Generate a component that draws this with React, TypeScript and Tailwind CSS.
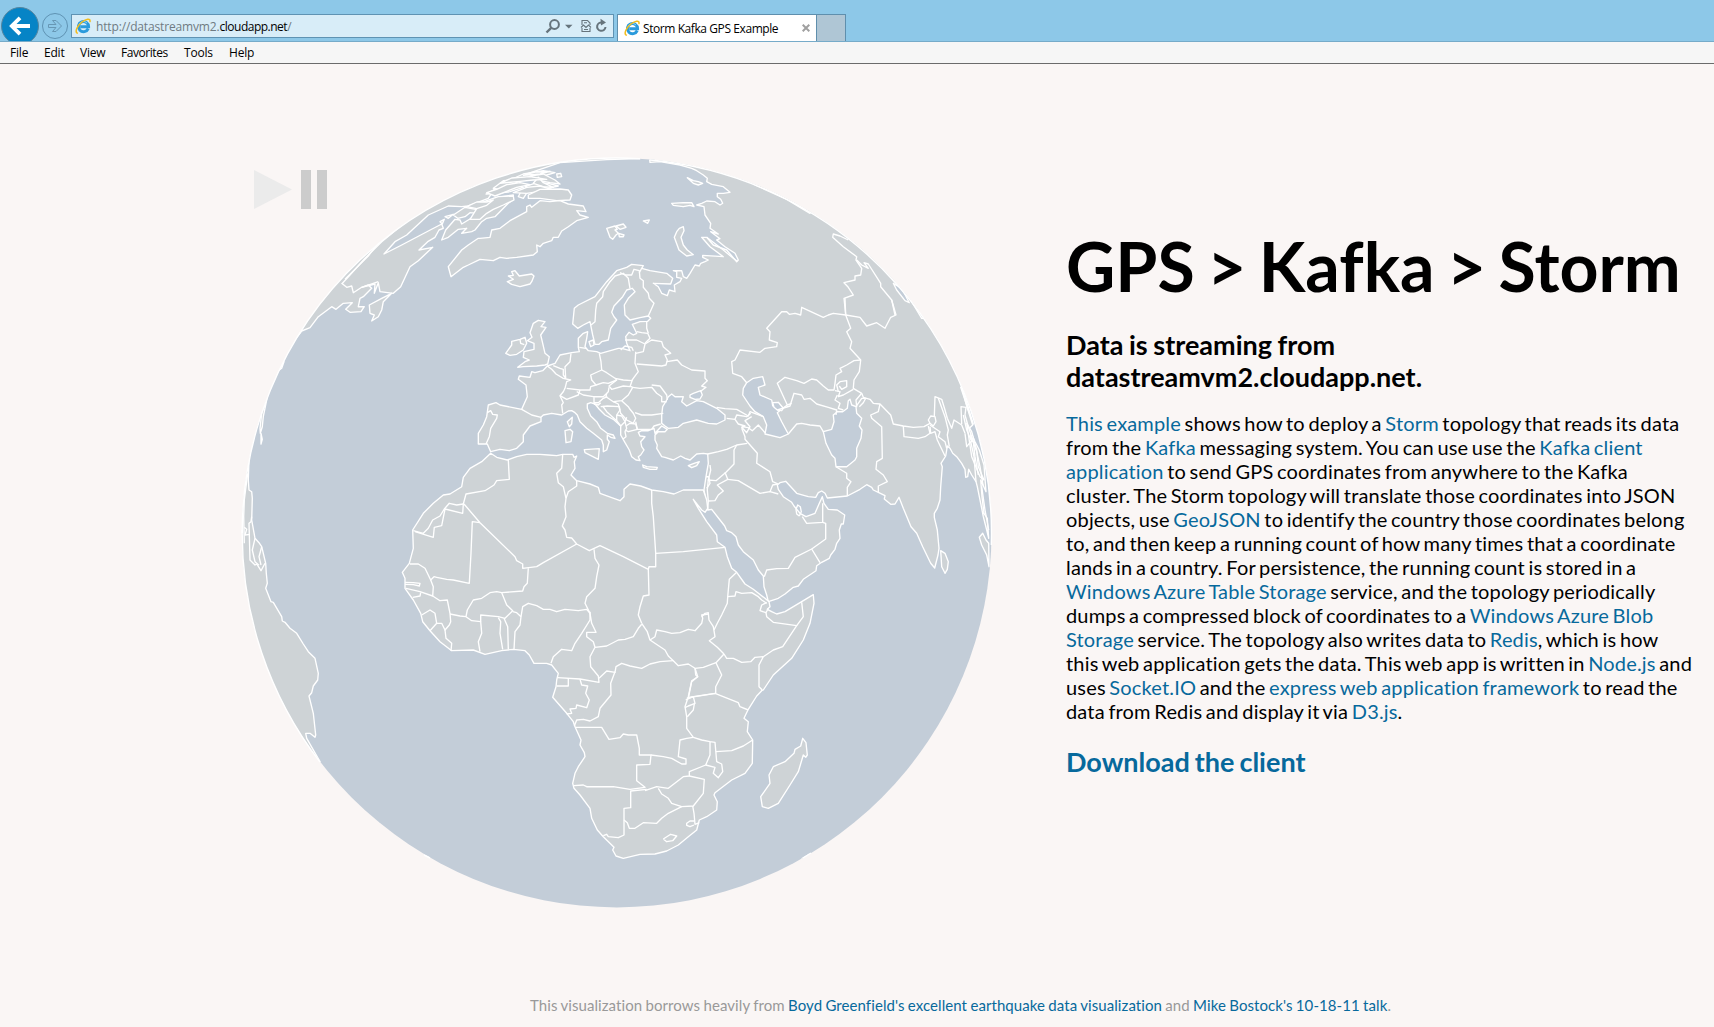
import React from "react";

/* Each run of vertices belongs to a map tile; three tile units make one pixel. */
const TILES: Record<string, [number, number]> = {
  nw: [235, 150], n: [480, 150], ne: [640, 150], eu: [470, 300], as: [700, 300],
  wa: [390, 440], ea: [630, 440], sa: [540, 640], am: [235, 440],
};

type Run = [string, string];

function points(runs: Run[]) {
  const out: string[] = [];
  for (const [tile, pts] of runs) {
    const [ox, oy] = TILES[tile];
    for (const p of pts.trim().split(/\s+/)) {
      const [x, y] = p.split(",").map(Number);
      out.push((ox + x / 3).toFixed(1) + " " + (oy + y / 3).toFixed(1));
    }
  }
  return "M" + out.join("L");
}

const LAND: Run[][] = [
  // Eurasia
  [
    ["as", "950,-150 785,262 800,318 818,375 808,385 825,425 838,450 852,495 858,575 842,540 846,590 852,640 862,655 866,715 860,690 850,650 842,610 832,560 828,545 815,525 806,508 803,530 797,532 795,508 785,490 770,470 758,460 750,445 742,438 740,450 737,468 723,490 727,500 722,560 720,600 712,625 703,640 703,652 712,690 717,745 714,765 704,804 692,790 668,740 650,700 633,680 610,625 597,592 585,612 572,613 553,597 555,587 535,577 520,570 515,562 500,554 480,568 442,588 382,594 375,580 365,573 355,578 347,592 325,590 290,580 257,544 240,548 232,555 235,568 250,590 275,607 282,618 300,640 318,650 345,640 357,612 367,590 372,610 385,628 412,630 434,645 430,672 424,672 418,690 420,715 410,730 405,748 392,765 388,775 365,787 350,797 348,812 310,838"],
    ["ea", "505,438 490,442 465,462 445,475 415,485 410,465 402,440 400,408 385,390 370,360 340,335 325,315 318,290 305,278 290,272 284,258 270,240 245,208 233,210 222,150 228,110 235,70 233,42"],
    ["eu", "700,460 680,462 660,480 645,475 632,468 610,480 585,472 575,470 560,445 562,435 555,420 555,405 565,395 585,395 592,388 575,378 555,400 552,385 535,392 515,392 505,397 510,408 525,410 512,425 515,440 522,450 512,465 505,470 510,482 498,480 485,470 478,450 465,428 452,405 452,378 430,358 405,345 388,328 375,312 362,308 352,312 352,325 362,348 380,365 392,385 412,400 430,405 435,415 422,412 412,405 412,418 418,425 410,450 400,455 400,435 395,420 370,400 350,385 330,365 322,345 315,338 305,332 295,333 275,345 245,340 220,345 213,352 213,365 180,378 160,405 160,425 140,445 118,452 90,448 62,455 52,432 25,432 25,400 40,375 50,350 55,315 78,308 90,315 155,328 172,290 168,255 145,238 148,228 180,232 185,215 195,218 218,212 232,198 255,190 270,165 305,158 328,155 325,142 325,115 340,100 353,95 350,115 345,140 355,152 380,155 392,160 445,145 455,145 480,152"],
    ["n", "440,580 437,560 447,547 460,555 470,550 457,523 480,515 503,514 512,505 505,498 480,503 450,510 435,495 433,465 445,445 465,425 457,415 440,420 428,440 402,468 395,487 402,500 410,510 392,535 385,570 365,575 357,583 345,583 338,555 333,530 330,515 310,525 293,535 278,522 283,475 295,465 345,440 380,395 410,362 440,352 455,343 490,347 485,355 510,362 560,370 578,385 572,402 520,400 535,410 545,430 562,437 568,420 585,425 583,405 600,395 605,385 590,382 590,365 580,362 605,362 610,380 620,385 630,370 645,345 658,348 662,340 675,335 685,330 668,322 668,316 730,320 690,290 665,262 680,262 700,285 740,300 770,335 775,330 765,310 735,290 710,270 720,266 692,245 715,252 690,235 692,220 675,195 672,170 650,165 665,160 680,153 705,155 720,165 728,160 722,148 712,140 712,130 730,130 750,127 730,110 695,103 680,95 682,85 670,75 650,62 635,55 600,45 540,35 510,37 500,-40"],
  ],
  // Africa
  [
    ["wa", "302,40 320,52 352,60 380,50 410,43 450,43 475,45 500,47 518,43 548,43 552,52 560,48 553,65 555,85 543,105 560,122 600,132 625,142 630,160 690,182 702,170 702,148 720,132 752,138 785,150 820,155 852,162 880,150 905,150 940,150"],
    ["ea", "230,180 233,205 225,217 215,210 190,178 205,205 230,245 260,285 262,305 285,322 292,350 305,385 320,397 345,432 370,448 405,475 417,485 420,500 412,508 425,515 440,522 465,515 515,485 550,464 552,490 540,550 520,600 485,655 430,705 400,750"],
    ["sa", "665,152 650,168 625,208 612,235 625,245 622,275 638,300 637,370 615,400 575,420 525,458 522,465 532,485 530,510 500,530 478,540 470,570 445,590 415,615 380,633 345,642 300,643 250,655 228,648 218,630 222,622 190,590 172,570 155,535 150,505 120,465 102,445 98,430 105,400 115,380 135,350 133,338 120,315 123,300 105,260 100,245 80,220 38,172 48,140 50,120 55,100 35,75"],
    ["wa", "470,670 432,670 418,645 405,632 370,628 335,632 285,643 250,630 185,632 150,605 120,572 98,545 92,520 70,480 45,445 45,415 37,397 58,370 70,325 68,270 100,220 130,190 160,165 180,162 215,140 220,112 240,85 275,65 302,40"],
  ],
  // Madagascar
  [["sa", "788,295 798,308 802,345 797,352 790,345 775,395 750,435 715,490 685,505 667,500 662,470 690,430 687,405 700,380 735,365 762,340 765,328 782,318 788,295"]],
  // North America
  [["nw", "0,800 200,543 225,533 250,500 290,470 303,478 325,460 352,458 332,478 345,487 378,485 388,470 370,470 375,445 385,440 410,415 400,405 380,412 420,402 418,430 430,398 435,425 475,430 497,410 525,350 550,332 593,292 552,300 578,275 600,262 612,240 625,235 620,222 580,243 500,285 447,312 480,275 515,255 580,195 640,168 680,170 700,168 760,145 780,115 830,90 880,70"], ["n", "240,38 380,29 480,26 480,-60 -700,-60"]],
  // Newfoundland
  [["nw", "405,490 403,465 440,445 470,430 445,455 440,480 430,500 410,513 418,495 405,490"]],
  // Baffin Island and its neighbours
  [["nw", "620,270 632,240 660,208 675,210 680,222 740,185 770,155 800,140 835,135 835,150 820,160 780,200 755,205 740,215 720,240 710,245 680,250 695,235 670,238 640,262 620,270"]],
  [["nw", "630,200 655,193 640,205 630,200"]],
  [["nw", "655,195 690,172 722,178 728,190 705,188 690,200 668,205 655,195"]],
  [["nw", "615,215 628,208 622,222 615,215"]],
  [["n", "0,160 20,152 55,140 100,138 102,150 70,165 40,178 20,190 0,208 -30,208 0,160"]],
  [["n", "18,132 60,110 110,105 130,112 90,125 50,130 18,132"]],
  [["n", "40,115 70,92 130,88 100,102 60,118 40,115"]],
  [["n", "90,90 130,72 190,62 225,68 190,78 130,84 90,90"]],
  [["n", "115,140 125,120 145,122 130,145 115,140"]],
  [["n", "135,110 170,98 205,100 235,108 200,116 165,122 135,110"]],
  [["n", "150,78 190,72 225,90 240,102 210,98 180,92 150,78"]],
  [["n", "160,100 175,82 190,98 220,112 190,110 160,100"]],
  [["n", "20,128 50,118 80,104 120,98 150,104 110,112 80,124 45,138 20,128"]],
  [["n", "60,100 95,84 150,80 200,88 160,90 120,94 60,100"]],
  [["n", "130,76 165,66 210,64 180,72 130,76"]],
  [["n", "100,128 140,112 180,108 215,118 180,124 140,130 100,128"]],
  [["n", "-40,170 -10,156 20,156 40,150 20,166 -10,176 -40,170"]],
  [["n", "230,72 242,70 245,80 232,82 230,72"]],
  [["n", "145,135 180,118 240,117 265,120 275,135 270,150 230,152 180,145 145,145 145,135"]],
  // Greenland
  [["n", "0,265 30,262 35,240 60,235 90,212 140,185 140,170 150,165 155,172 180,152 210,155 240,152 265,162 310,168 318,185 290,182 300,195 325,202 290,212 265,230 245,243 235,262 220,262 215,272 190,280 180,290 170,285 172,305 160,315 110,322 80,325 60,322 40,332 0,328"], ["nw", "700,345 685,352 648,380 640,350 680,300 700,285 730,265 735,265"]],
  // Iceland and the Arctic islands
  [["n", "95,365 105,362 118,378 155,372 162,378 155,395 150,402 120,410 95,403 82,395 100,388 85,378 100,376 95,365"]],
  [["n", "380,235 405,228 412,238 405,240 415,250 408,255 398,268 390,262 380,235"]],
  [["n", "408,228 430,222 438,232 420,238 408,228"]],
  [["n", "416,250 432,255 430,260 418,260 416,250"]],
  [["n", "490,213 508,210 503,220 490,213"]],
  [["n", "598,235 610,230 612,242 603,262 610,285 622,300 640,314 620,318 597,300 583,262 590,245 598,235"]],
  [["n", "575,160 610,158 635,158 642,170 630,166 610,170 580,166 575,160"]],
  [["n", "622,83 640,92 655,95 668,100 655,105 640,100 622,83"]],
  // British Isles
  [["eu", "205,61 225,65 213,80 228,82 212,105 218,130 225,160 238,170 233,192 225,195 200,198 160,200 143,202 165,185 178,180 160,172 162,155 192,148 192,130 172,122 186,112 180,98 190,70 205,61"]],
  [["eu", "107,160 125,135 125,124 150,118 165,112 170,130 160,150 140,163 120,166 107,160"]],
  // Mediterranean islands
  [["eu", "518,495 530,500 562,502 560,508 540,508 520,502 518,495"]],
  [["eu", "655,497 672,490 688,485 680,497 665,503 655,497"]],
  [["eu", "343,449 388,446 385,478 345,458 343,449"]],
  [["eu", "285,392 300,388 308,395 303,425 288,428 285,392"]],
  [["eu", "292,365 307,352 305,372 298,380 292,365"]],
  [["eu", "357,125 370,120 372,135 362,140 357,125"]],
  // Sri Lanka, Sumatra
  [["as", "722,752 735,760 745,785 742,808 735,820 725,800 722,752"]],
  [["as", "838,712 848,700 858,720 866,730 867,800 860,765 845,735 838,712"]],
  [["as", "800,370 815,395 830,450 835,500 852,540 840,530 815,470 800,370"]],
  // South America
  [["am", "-60,60 42,60 40,120 42,150 50,155 52,175 50,240 60,295 72,308 80,320 92,370 94,400 97,430 92,445 108,485 115,487 140,530 142,543 150,547 165,565 185,580 205,612 220,635 240,655 250,700 248,720 235,738 230,758 222,768 235,820 242,885 240,892 225,880 212,880 215,895 255,965 -60,1000"]],
  [["nw", "130,662 147,635 140,655 130,662"]],
  [["nw", "75,835 80,790 98,735 85,800 82,830 76,850 75,835"]],
  [["nw", "78,850 82,868 78,882 78,850"]],
  [["sa", "786,656 808,643 800,650 786,656"]],
];

const WATER: Run[][] = [
  [["eu", "575,345 578,320 590,300 595,290 605,282 615,290 640,290 635,305 650,318 680,302 700,305 740,325 765,345 765,360 740,372 715,370 680,360 640,370 625,382 595,385 585,378 575,370 575,345"]],
  [["eu", "660,285 670,280 692,272 697,285 690,297 675,298 660,292 660,285"]],
  [["as", "140,248 160,235 188,230 195,255 175,262 180,285 215,300 218,318 235,325 248,325 232,338 245,365 265,402 240,413 195,402 200,375 190,350 165,335 150,318 128,285 130,265 140,248"]],
  [["as", "218,308 235,307 250,325 245,332 232,330 222,322 218,308"]],
  [["as", "400,345 412,335 428,335 442,325 445,302 450,298 455,315 468,320 470,340 485,355 478,378 486,390 483,415 470,445 470,470 465,480 440,500 408,500 405,475 395,465 378,430 370,395 395,388 402,365 400,345"]],
  [["ne", "345,105 430,140 470,162 510,190 440,148 345,105"]],
  [["ne", "760,400 785,415 808,458 795,452 770,420 760,400"]],
  [["ne", "815,455 855,505 845,505 815,455"]],
  [["as", "782,262 798,300 820,372 805,330 782,262"]],
];

const BORDERS: Run[] = [
  // North-west Africa
  ["wa", "355,60 358,118 320,122 312,135 285,152 228,162 220,192 218,220 165,207 155,257 133,262 130,292 75,275"],
  ["wa", "220,192 200,195 178,190 163,207 150,228 128,240 115,265 100,280 70,272"],
  ["wa", "222,192 270,248 375,350 380,362 398,372 398,385 440,380 460,368 560,312"],
  ["wa", "270,248 247,245 243,340 238,430 190,420 170,418 140,412 132,410 122,420 105,385 85,372 60,372"],
  ["wa", "122,420 130,440 128,468 90,455 48,445"],
  ["wa", "45,427 70,428 90,430 88,438 70,434 45,433"],
  ["wa", "128,468 150,482 172,480 180,520 182,545 178,555 165,570 155,550 140,550 135,520 120,510 95,525"],
  ["wa", "140,550 120,572"],
  ["wa", "92,458 90,468 68,472"],
  ["wa", "165,570 168,595 185,610 183,632"],
  ["wa", "180,522 210,528 228,530 245,542 272,545 275,580 265,605 270,635"],
  ["wa", "228,530 232,510 250,480 275,475 300,458 320,455 335,458 350,495 368,512 345,535 325,530 272,525 272,545"],
  ["wa", "325,533 332,545 330,580 338,628"],
  ["wa", "342,535 353,560 355,628"],
  ["wa", "368,515 380,518 393,530 390,555 375,575 372,628"],
  ["wa", "335,458 398,453 402,440 412,430 415,385"],
  ["wa", "393,530 398,500 415,490 440,497 460,508 480,508 500,515 525,508 565,512 590,508 600,520"],
  ["wa", "518,43 515,85 500,100 505,128 520,140 528,175 525,200 528,230 517,258 525,270 530,292 545,294 560,312 598,332 630,317 700,350 775,388 777,465 760,468 750,500 745,525 755,550"],
  ["wa", "560,122 560,138 535,155 528,175"],
  ["wa", "785,150 785,190 790,230 797,340 797,380 777,380 775,388"],
  ["wa", "797,340 880,335 1005,322"],
  ["wa", "612,328 615,355 627,375 620,410 615,445 590,470 585,490 600,520 605,550 618,577 590,577 590,590 610,605 615,622"],
  ["wa", "600,515 600,540 575,580 555,610 545,632 515,628 490,650 483,670"],
  ["wa", "615,622 600,650 602,680 625,708 627,727 570,717 503,713"],
  ["wa", "615,622 650,618 685,600 705,598 730,590 745,565 755,553"],
  ["wa", "755,550 772,575 780,600 825,630 835,648 850,662 810,665 780,672 755,685 720,678 695,670 678,680 675,697 650,693 627,715"],
  ["wa", "780,600 795,590 800,570 825,575 845,580 870,578 895,568 915,572 935,550 938,535 935,525 955,522"],
  ["wa", "500,738 535,738 535,715"],
  // East Africa
  ["ea", "215,530 225,520 235,518 237,540 250,560 255,590 238,602 262,622 282,642"],
  ["ea", "320,397 298,418 293,470 292,490 275,525 262,550 252,570"],
  ["ea", "293,470 315,468 318,455 335,460 365,458 385,470 395,480 410,490"],
  ["ea", "410,488 395,495 390,512 408,518 415,505"],
  ["ea", "408,518 410,530 430,547 500,557 458,620 430,630 400,650"],
  ["ea", "500,557 520,530 515,487"],
  ["ea", "282,642 290,655 310,655 335,667 362,665 375,652 400,650 387,675 387,740 397,750"],
  ["ea", "282,642 258,668 275,705 257,740 257,760 195,770 170,775"],
  ["ea", "130,662 145,677 175,672 195,685 220,682 258,668"],
  ["ea", "195,685 197,705 203,710 185,725 175,775"],
  // Central and southern Africa
  ["sa", "225,95 212,130 213,165 180,205 175,230 150,243 130,238 110,240 103,258"],
  ["sa", "120,118 125,135 143,138 137,160 148,180 140,203 110,195 108,205 90,207 95,220 80,222"],
  ["sa", "105,262 185,262 207,298 240,293 250,282 265,285 290,285 298,325 298,345 333,345 330,373 290,375 290,422 315,442 270,448 220,440 140,440 130,435 102,437"],
  ["sa", "333,345 370,350 395,355 425,372 438,372 438,357 415,350 420,300 440,295 460,292"],
  ["sa", "465,85 473,110 455,122 445,170 435,200 440,230 440,265 460,292 485,300 510,305 510,345 497,375 525,382 520,400 535,413 548,395 545,372 530,365 525,307 510,305"],
  ["sa", "437,180 460,170 465,190 445,198 435,203"],
  ["sa", "463,192 460,210 442,230"],
  ["sa", "445,172 525,160 595,188 600,200 625,210"],
  ["sa", "528,335 575,332 610,318 638,300"],
  ["sa", "497,375 448,395 448,408 430,410 385,445 350,440 315,452"],
  ["sa", "448,408 493,418 490,460 460,498 425,500 395,490 385,475 365,462 355,445"],
  ["sa", "320,448 272,453 272,503 252,505 252,585 235,593 205,590 200,583 190,587"],
  ["sa", "252,540 262,548 268,565 285,565 310,548 350,550 365,535 385,520 425,500"],
  ["sa", "458,498 462,520 465,553 478,548"],
  ["sa", "462,543 450,543 440,550 440,556 450,560 462,555"],
  ["sa", "370,597 392,583 410,588 398,602 380,605 370,597"],
  // Middle East
  ["ea", "240,75 242,90 235,120 232,150 235,183 233,210"],
  ["ea", "228,110 236,110 240,130 230,145"],
  ["ea", "233,120 258,122 288,97 312,72 312,30 320,15"],
  ["ea", "233,42 265,35 290,28 320,15 352,10"],
  ["ea", "285,97 293,118 262,135 280,153 265,165 255,182 235,183"],
  ["ea", "293,118 325,122 390,160 420,155 445,162"],
  ["ea", "420,155 428,135 442,132"],
  ["ea", "517,230 530,250 578,247 578,190"],
  ["ea", "578,247 587,250 587,297 545,327 570,368"],
  ["ea", "545,327 495,352 475,385 440,386 410,390 403,410"],
  ["ea", "508,228 500,222 498,208 503,195 511,200 514,215 508,228"],
  // Europe
  ["eu", "52,338 62,332 68,343 82,345 80,355 62,385 58,410 48,432"],
  ["eu", "155,328 185,345 213,352"],
  ["eu", "278,340 275,315 280,308 270,287 280,275 285,265 290,245 302,240 280,235 258,222 245,208 232,198"],
  ["eu", "250,197 270,205 280,208 280,225 287,235 285,200 300,185 303,160"],
  ["eu", "388,160 393,185 395,210 362,225 365,240 378,255 362,260 360,270 330,270 290,265"],
  ["eu", "328,142 348,145"],
  ["eu", "395,210 410,218 435,235 440,240 415,250 400,248 378,255"],
  ["eu", "435,235 460,240 485,242 492,232 505,215 495,190 497,155"],
  ["eu", "440,240 417,258 425,268 460,258 480,260 487,240"],
  ["eu", "270,287 290,298 325,285 330,270"],
  ["eu", "320,275 340,285 370,290 400,290 415,275 417,262"],
  ["eu", "410,280 408,290 430,305 455,302 475,285 488,262 480,258"],
  ["eu", "372,292 372,308 385,308 400,295 412,290"],
  ["eu", "372,312 385,315 392,308"],
  ["eu", "392,320 412,318 448,320 450,330 440,345 440,362 410,335 398,318"],
  ["eu", "430,305 445,312 452,340 470,360 490,370 497,355 490,340 480,328 475,320 455,302"],
  ["eu", "440,345 455,348 465,365 470,352"],
  ["eu", "495,338 515,345 545,345 580,340"],
  ["eu", "488,262 510,265 545,262 560,280 575,290 575,305 590,305"],
  ["eu", "545,255 570,258 590,285 592,300"],
  ["eu", "440,362 452,378 465,365 470,385 465,395 468,410 458,418"],
  ["eu", "468,378 480,370 497,372 502,388 475,395 465,390"],
  ["eu", "497,365 502,388 545,388 552,378 572,372"],
  ["eu", "465,120 500,120 525,132 520,155 497,160"],
  ["eu", "452,150 465,138 485,142 490,152"],
  ["eu", "500,95 515,98 533,100 540,115 525,130"],
  ["eu", "530,63 530,85 535,100"],
  ["eu", "525,132 545,120 575,125 580,140 602,160 585,165 592,180 588,195 575,198 500,192"],
  ["eu", "590,185 622,180 635,195 665,210 705,213 705,235 712,242 695,258 708,262 690,275"],
  ["eu", "150,118 152,130 163,134"],
  ["n", "333,525 345,515 347,480 350,460 368,440 370,425 390,395 405,378 430,370 445,385 450,415"],
  ["n", "420,368 435,375 455,375 462,358 478,362 480,385 490,392 490,412 505,430 508,445 522,460 505,498"],
  ["n", "485,355 478,368"],
  // Caucasus and Central Asia
  ["as", "50,322 75,326 110,328 145,348 150,335 190,350"],
  ["as", "80,355 105,358 110,345 140,350 152,340"],
  ["as", "105,358 115,372 135,378 125,382 140,398 150,380 135,362 155,350"],
  ["as", "125,380 145,383 157,392 175,375 195,398"],
  ["as", "125,385 135,410 135,418 172,460 170,490 210,515 218,545 235,552"],
  ["as", "435,-5 437,45 400,40 385,45 370,52 305,22 302,45 285,40 268,43 260,35 245,35 200,85 210,95 208,120 232,128 230,140 215,142 195,145 180,157 120,150 105,180 95,185 98,220 125,230 140,248"],
  ["as", "437,45 480,52 500,78 530,68 555,85 572,52 588,45 575,0"],
  ["as", "437,45 452,85 440,95 455,125 450,145 482,180 478,215 462,240 460,265 485,280 490,292 510,298 520,310 540,312 572,345 580,372 610,378 640,382 672,380 690,370"],
  ["as", "482,180 462,182 440,195 420,205 425,215 408,225 405,250 402,270 385,270 370,258 350,240 335,237 312,250 290,242 255,232 232,250 262,315"],
  ["as", "415,275 410,255 420,245 440,242 440,260 425,268 418,258"],
  ["as", "405,272 420,275 415,290 430,285 460,268"],
  ["as", "412,285 405,300 420,310 415,325 430,330"],
  ["as", "232,330 270,318 282,280 305,285 312,298 330,295 350,312 385,322 410,330 408,345"],
  ["as", "248,325 262,315 275,310"],
  ["as", "370,395 360,378 330,375 305,370 290,372 265,402"],
  ["as", "468,320 485,295 497,295 490,308 478,320"],
  ["as", "485,280 468,300 470,322"],
  ["as", "540,312 535,335 512,345 515,355 545,380 547,475 530,485 528,508 550,525 562,545 535,558 535,577"],
  ["as", "408,500 440,520 440,535 453,545 442,562 442,588"],
  ["as", "610,378 612,410 655,415 675,410 690,400 685,378"],
  ["as", "690,370 685,360 692,348 705,350 708,365 700,378 690,370"],
  ["as", "703,350 705,290 725,298 735,330 742,355 755,385 762,360 785,375 795,400"],
  ["as", "690,380 692,400 705,395 712,420 735,468"],
  ["as", "690,375 720,395 715,410 735,425 740,445"],
  ["as", "715,295 735,350 745,390 742,405 748,440"],
  ["as", "785,372 783,320 798,322 795,345 805,380 820,425 825,470 835,525"],
  ["as", "795,400 800,440 812,425 822,470 828,545"],
  ["as", "790,345 800,390 815,425 812,405 830,455 840,500 850,560"],
  ["as", "845,560 855,630 866,690"],
  // Siberia, Mongolia
  ["ne", "617,495 612,445 640,435 625,412 612,398 645,390 645,378 662,375 665,355 648,330 650,320 610,290 578,262 580,252 600,258 625,270"],
  ["ne", "650,330 665,345 685,355 672,338 685,342 722,400 722,410 755,450 765,495"],
  ["ne", "200,262 250,300 280,325 292,334"],
  // The Americas
  ["nw", "320,400 335,412 350,408 355,428 380,412 430,395"],
  ["nw", "320,402 345,375 390,325 440,275 520,210"],
  ["nw", "440,265 400,318 330,388"],
  ["am", "50,230 48,245 42,250 45,360 60,375 65,372 78,392 90,370"],
  ["am", "60,295 52,330 60,365 72,376"],
  ["am", "80,320 72,350 78,375"],
  ["am", "28,262 35,268 30,285 45,283"],
  ["am", "38,100 28,180 26,230 28,310"],
];

const LINKS = "text-[#07699c]";

function Globe() {
  return (
    <svg className="block h-[800px] w-[1030px]" viewBox="0 130 1030 800" aria-label="Globe">
      <defs>
        <clipPath id="disc"><circle cx="616.800" cy="532.700" r="374.700" /></clipPath>
      </defs>
      <circle cx="616.800" cy="532.700" r="374.700" fill="#c3cdd8" />
      <g clipPath="url(#disc)" stroke="#fff" strokeWidth="1.350" strokeLinejoin="round">
        {LAND.map((r, i) => <path key={i} d={points(r) + "Z"} fill="#ced3d6" />)}
        {WATER.map((r, i) => <path key={i} d={points(r) + "Z"} fill="#c3cdd8" />)}
        {BORDERS.map((r, i) => <path key={i} d={points([r])} fill="none" />)}
      </g>
      <g fill="none" stroke="#fff" strokeWidth="1.400">
        <path d="M650 160A374.700 374.700 0 0 1 991.300 545" />
        <path d="M242.200 533A374.700 374.700 0 0 1 640 158.800" />
        <path d="M242.200 530A374.700 374.700 0 0 0 320 762" />
        <path d="M424 855l6 3M803 858l8-5" />
      </g>
    </svg>
  );
}

function IeLogo() {
  return (
    <svg className="size-4 shrink-0" viewBox="0 0 16 16" fill="none">
      <path d="M13.200 10.600A5.100 5.100 0 1 1 13.600 8.700H5.200" stroke="#2b9bdc" strokeWidth="3" />
      <path d="M4 6.500A4.800 4.800 0 0 1 12 5" stroke="#8ad4f6" strokeWidth="1" />
      <path d="M2.200 15.200C-.5 13.500 2.500 7.500 7 4 11 .9 15.500-.3 15 3.600" stroke="#f2bd1d" strokeWidth="1.500" strokeLinecap="round" />
    </svg>
  );
}

function Chrome() {
  return (
    <header className="font-['Open_Sans',sans-serif] text-[12px] text-black">
      <div className="flex h-[41px] items-end overflow-hidden bg-[#8dc8e8]">
        <svg className="h-[41px] w-[71px] shrink-0" viewBox="0 0 71 41" fill="none">
          <circle cx="20" cy="26" r="18.500" fill="#0684c6" stroke="#5586a0" />
          <path d="M30 26H13M20 17.800L11.800 26L20 34.200" stroke="#fff" strokeWidth="3.800" />
          <circle cx="55" cy="26" r="12.500" stroke="#5f93b3" />
          <path d="M48.500 24.500h7.500l-3.500-4h3.500l5.500 5.500-5.500 5.500h-3.500l3.500-4h-7.500z" stroke="#6797b4" />
        </svg>
        <div className="mb-[3px] flex h-6 w-[543px] shrink-0 items-center border border-[#5f93b3] bg-[#d8edf8] pr-[5px] pl-[3px]">
          <IeLogo />
          <span className="mt-px ml-[5px] text-[#6f7b82]"><span className="tracking-[-0.15px]">http://datastreamvm2.</span><span className="tracking-[-0.5px] text-black">cloudapp.net</span>/</span>
          <svg className="ml-auto h-4 w-[64px]" viewBox="0 0 64 16" fill="none" stroke="#66747c">
            <circle cx="10.500" cy="6.500" r="4.400" strokeWidth="2" />
            <path d="M7.200 9.800L2.500 14.500" strokeWidth="2.400" />
            <path d="M21 6.800h7.500l-3.700 3.800z" fill="#66747c" stroke="none" />
            <path d="M38 7V2.500h5.500l2.500 2.500V7M38 10v3.500h8V10M37 9.500l2.500-2.500 2.500 2.500 2.500-2.500 2.500 2.500M40 11.500h4M40 4.700h3" strokeWidth="1.100" />
            <path d="M58.500 4.600A4.200 4.200 0 1 0 61.500 9" strokeWidth="2" />
            <path d="M56.500 .8l5.500 3.700-5 3z" fill="#66747c" stroke="none" />
          </svg>
        </div>
        <div className="ml-[3px] flex h-[27px] w-[200px] shrink-0 items-center border border-b-0 border-[#5f8fad] bg-white pl-[6px]">
          <IeLogo />
          <span className="mt-px ml-[3px] tracking-[-0.42px] whitespace-nowrap">Storm Kafka GPS Example</span>
          <svg className="mr-[6px] ml-auto size-2" viewBox="0 0 8 8"><path d="M.7.7l6.600 6.600M7.300.7L.7 7.300" stroke="#a0a0a0" strokeWidth="2" /></svg>
        </div>
        <div className="h-[27px] w-[29px] shrink-0 border border-b-0 border-l-0 border-[#5f8fad] bg-[#afc6d5]" />
      </div>
      <nav className="flex h-[23px] items-center gap-4 border-t border-b border-t-[#76abc9] border-b-[#6b6b6b] bg-[#f6f6f6] pl-[10px] tracking-[-0.2px] whitespace-nowrap">
        <span className="w-[18px]">File</span>
        <span className="w-[20px]">Edit</span>
        <span className="w-[25px]">View</span>
        <span className="w-[47px] tracking-[-0.45px]">Favorites</span>
        <span className="w-[29px]">Tools</span>
        <span>Help</span>
      </nav>
    </header>
  );
}

function A({ children }: { children: React.ReactNode }) {
  return <a className={LINKS}>{children}</a>;
}

export default function App() {
  return (
    <div className="flex h-[1027px] w-[1714px] flex-col overflow-hidden bg-[#faf6f5] font-['Lato',sans-serif] text-black [font-variant-ligatures:none]">
      <Chrome />
      <main className="relative flex flex-1 pt-[66px]">
        <Globe />
        <div className="absolute top-[106px] left-[254px] flex gap-[9px]">
          <svg className="h-[39px] w-[38px]" viewBox="0 0 38 39"><path d="M0 0L38 19.500L0 39z" fill="#ebebeb" /></svg>
          <div className="flex gap-[6px]"><i className="h-[39px] w-[10px] bg-[#ccc]" /><i className="h-[39px] w-[10px] bg-[#ccc]" /></div>
        </div>
        <article className="ml-[36px] pt-[94px] whitespace-nowrap">
          <h1 className="text-[68px] leading-[84px] font-bold [word-spacing:-4.200px]">GPS &gt; Kafka &gt; Storm</h1>
          <h2 className="mt-[21px] text-[27px] leading-8 font-bold [word-spacing:-1px]">Data is streaming from<br />datastreamvm2.cloudapp.net.</h2>
          <p className="mt-[18px] text-[20px] leading-6 tracking-[0.17px] [word-spacing:-1.700px]">
            <A>This example</A> shows how to deploy a <A>Storm</A> topology that reads its data<br />
            from the <A>Kafka</A> messaging system. You can use use the <A>Kafka client</A><br />
            <A>application</A> to send GPS coordinates from anywhere to the Kafka<br />
            cluster. The Storm topology will translate those coordinates into JSON<br />
            objects, use <A>GeoJSON</A> to identify the country those coordinates belong<br />
            to, and then keep a running count of how many times that a coordinate<br />
            lands in a country. For persistence, the running count is stored in a<br />
            <A>Windows Azure Table Storage</A> service, and the topology periodically<br />
            dumps a compressed block of coordinates to a <A>Windows Azure Blob</A><br />
            <A>Storage</A> service. The topology also writes data to <A>Redis</A>, which is how<br />
            this web application gets the data. This web app is written in <A>Node.js</A> and<br />
            uses <A>Socket.IO</A> and the <A>express web application framework</A> to read the<br />
            data from Redis and display it via <A>D3.js</A>.
          </p>
          <h2 className="mt-[23px] text-[27px] leading-8 font-bold [word-spacing:-1.600px]"><A>Download the client</A></h2>
        </article>
      </main>
      <footer className="mb-[10px] ml-[530px] text-[15px] leading-6 tracking-[0.075px] whitespace-nowrap text-[#999] [word-spacing:-0.600px]">
        This visualization borrows heavily from <A>Boyd Greenfield's excellent earthquake data visualization</A> and <A>Mike Bostock's 10-18-11 talk</A>.
      </footer>
    </div>
  );
}
